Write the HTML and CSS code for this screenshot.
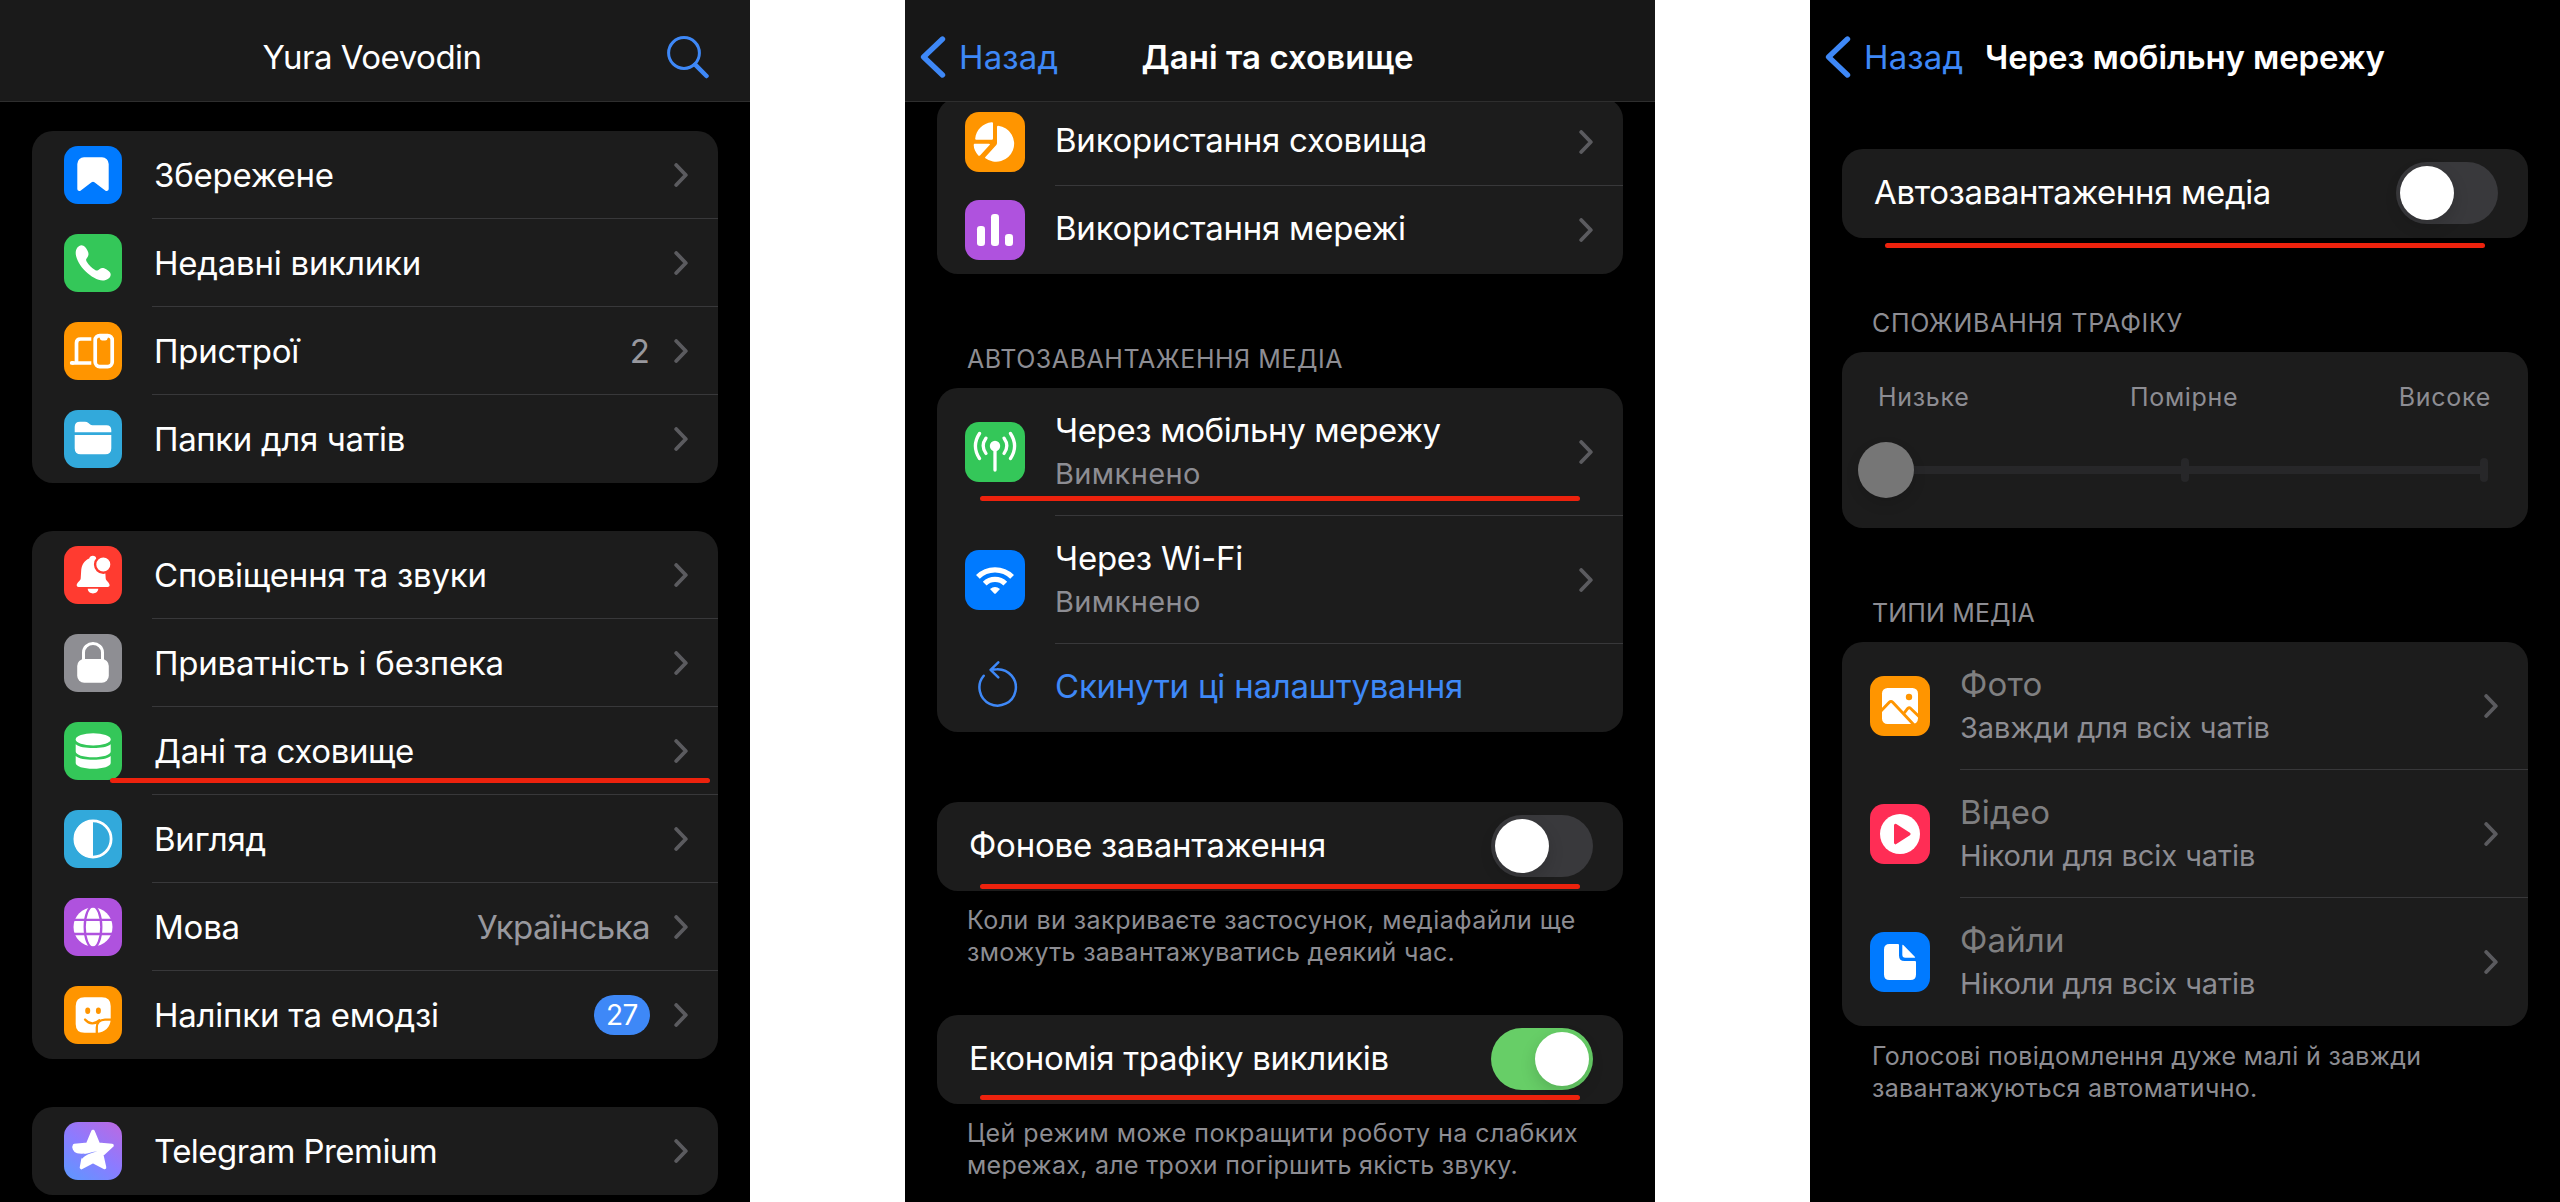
FILE: index.html
```html
<!DOCTYPE html>
<html lang="uk">
<head>
<meta charset="utf-8">
<title>Telegram</title>
<link rel="stylesheet" href="styles.css">
</head>
<body>
<svg class="defs" width="0" height="0" aria-hidden="true">
  <symbol id="chevron" viewBox="0 0 14 24"><path d="M2.200 2l9.600 10L2.200 22" fill="none" stroke="#5b5b5f" stroke-width="3.800" stroke-linecap="round" stroke-linejoin="round"/></symbol>
  <symbol id="back" viewBox="0 0 26 42"><path d="M22.500 3L3.600 21l18.900 18" fill="none" stroke="#3e88f7" stroke-width="5.400" stroke-linecap="round" stroke-linejoin="round"/></symbol>
</svg>

<main class="screens">
  <section class="phone">
    <header class="bar bar-light">
      <h1 class="title title-regular">Yura Voevodin</h1>
      <svg class="search" viewBox="0 0 44 44"><circle cx="18" cy="18" r="15.400"/><path d="M29.200 29.700L40.500 41" class="handle"/></svg>
    </header>
    <div class="card first-card">
      <div class="row">
        <svg class="icon bg-blue" viewBox="0 0 58 58"><path d="M20 11.300h18a6.700 6.700 0 0 1 6.700 6.700v24.800c0 2-2.100 3-3.500 1.700L30.400 36.300q-1.400-1.200-2.800 0l-10.800 8.200c-1.400 1.300-3.500.3-3.500-1.700V18a6.700 6.700 0 0 1 6.700-6.700z"/></svg>
        <div class="cell"><span class="label">Збережене</span><svg class="chev"><use href="#chevron"/></svg></div>
      </div>
      <div class="row">
        <svg class="icon bg-green" viewBox="0 0 58 58"><path d="M17.500 11.300c2.800 0 4.200 2.200 5.800 5s1.500 4.800.3 6.600c-1.500 2.200-2 2.700-1 4.600 2 3.500 5 6.300 8.500 8.400 1.800 1 2.400.6 4.600-1 1.800-1.300 3.800-1.300 6.500.4 2.600 1.600 4.500 3 4.500 5.300 0 3.600-4 6-8 6-5 0-12-4-17.500-9.500S11.700 24 11.700 19c0-4 2.600-7.700 5.800-7.700z"/></svg>
        <div class="cell"><span class="label">Недавні виклики</span><svg class="chev"><use href="#chevron"/></svg></div>
      </div>
      <div class="row">
        <svg class="icon bg-orange" viewBox="0 0 58 58"><g fill="none" stroke="#fff" stroke-width="3.700"><path d="M27.300 17H16.500q-4 0-4 4v19M7.700 41h19.600" stroke-linecap="butt"/><path d="M7.700 40.900h1" stroke-linecap="round"/><rect x="31.200" y="13.600" width="17" height="31" rx="4.500"/></g><path d="M34.500 13h10.500l-1.200 3q-.6 2.600-2.600 2.600h-3q-2 0-2.500-2.600z"/></svg>
        <div class="cell"><span class="label">Пристрої</span><span class="value">2</span><svg class="chev"><use href="#chevron"/></svg></div>
      </div>
      <div class="row">
        <svg class="icon bg-cyan" viewBox="0 0 58 58"><path d="M10.700 22.300V17q0-5.300 5.300-5.300h5q2 0 3.400 1.300l1.800 1.500q.9.800 2.300.8h14q4.800 0 4.800 4.700v2.300zM10.700 25h36.600v13.300q0 6-6 6H16.700q-6 0-6-6z"/></svg>
        <div class="cell"><span class="label snug">Папки для чатів</span><svg class="chev"><use href="#chevron"/></svg></div>
      </div>
    </div>

    <div class="card second-card">
      <div class="row">
        <svg class="icon bg-red" viewBox="0 0 58 58"><path d="M28.800 9.700c2 0 3.300 1.200 3.600 2.800 5.600 2 8.700 6 8.900 13.500l.4 6.500c.3 2.500 3.900 4 3.900 6.800 0 1.200-.8 1.700-2 1.700h-29c-1.200 0-1.900-.5-1.900-1.700 0-2.800 3.700-4.300 4-6.800l.4-6.500c.2-7.500 3.300-11.500 8.100-13.500.3-1.600 1.700-2.800 3.600-2.800zM23.700 42.700h10.600c-.2 2.800-2.600 4.700-5.300 4.700s-5.100-1.900-5.300-4.700z"/><circle cx="39.300" cy="18.500" r="8.200" stroke="#ff3b30" stroke-width="2.400"/></svg>
        <div class="cell"><span class="label">Сповіщення та звуки</span><svg class="chev"><use href="#chevron"/></svg></div>
      </div>
      <div class="row">
        <svg class="icon bg-gray" viewBox="0 0 58 58"><rect x="13.200" y="25" width="31.600" height="23.700" rx="7"/><path d="M19.500 27v-8.500a9.500 9 0 0 1 19 0V27" fill="none" stroke="#fff" stroke-width="3"/></svg>
        <div class="cell"><span class="label">Приватність і безпека</span><svg class="chev"><use href="#chevron"/></svg></div>
      </div>
      <div class="row">
        <svg class="icon bg-green" viewBox="0 0 58 58"><ellipse cx="29.200" cy="17.400" rx="17.500" ry="6.100"/><path d="M11.700 22.300c3.500 2.700 9.500 3.800 17.500 3.800s14-1.100 17.500-3.800V29.500c0 3.400-7.800 5.800-17.500 5.800s-17.500-2.400-17.500-5.800zM11.700 34c3.500 2.700 9.500 3.800 17.500 3.800s14-1.100 17.500-3.800v6.900c0 3.400-7.800 5.800-17.500 5.800s-17.500-2.400-17.500-5.800z"/></svg>
        <div class="cell"><span class="label snug">Дані та сховище</span><svg class="chev"><use href="#chevron"/></svg></div>
        <i class="mark mark-data"></i>
      </div>
      <div class="row">
        <svg class="icon bg-cyan" viewBox="0 0 58 58"><circle cx="29" cy="29" r="18.100" fill="none" stroke="#fff" stroke-width="2.800"/><path d="M29 10a19 19 0 0 0 0 38z"/></svg>
        <div class="cell"><span class="label">Вигляд</span><svg class="chev"><use href="#chevron"/></svg></div>
      </div>
      <div class="row">
        <svg class="icon bg-purple" viewBox="0 0 58 58"><circle cx="29" cy="29" r="19.500"/><g fill="none" stroke="#af52de" stroke-width="2.300"><ellipse cx="29" cy="29" rx="8.300" ry="20.700"/><path d="M8 21.900h42M8 36h42"/></g></svg>
        <div class="cell"><span class="label">Мова</span><span class="value tight">Українська</span><svg class="chev"><use href="#chevron"/></svg></div>
      </div>
      <div class="row">
        <svg class="icon bg-orange" viewBox="0 0 58 58"><path d="M20.500 11.300h17.400q8.800 0 8.800 8.800V33c0 8-6.500 13.800-13.700 13.800H20.500q-8.800 0-8.800-8.800V20.100q0-8.800 8.800-8.800z"/><g fill="#ff9500"><ellipse cx="23.700" cy="24.800" rx="2.500" ry="3.200"/><ellipse cx="34.400" cy="24.800" rx="2.500" ry="3.200"/></g><path d="M21 33.500c4.500 5.200 10 4.800 14.500.7M47.500 33.600H41c-5 0-8.200 3.200-8.200 8V48" fill="none" stroke="#ff9500" stroke-width="2.300" stroke-linecap="round"/></svg>
        <div class="cell"><span class="label">Наліпки та емодзі</span><span class="badge">27</span><svg class="chev"><use href="#chevron"/></svg></div>
      </div>
    </div>

    <div class="card third-card">
      <div class="row">
        <svg class="icon bg-premium" viewBox="0 0 58 58"><path d="M29 9.500l5.300 12.800 13.700 1.200-10.300 9.300 2.800 12.700L29 39.300 17.500 45.500l1.500-8c.6-3.500 5-6.500 10.500-8.500-6 .3-11.500 1.700-16 .5-3-.8-4-4.500-3-6l13.200-1.200z" stroke="#fff" stroke-width="3.600" stroke-linejoin="round"/><path d="M16 32.500c4.500.5 10-2.300 17.500-3.200-7.300 2-12 3.800-15.500 7.500z" fill="#7d84ff"/></svg>
        <div class="cell"><span class="label tight">Telegram Premium</span><svg class="chev"><use href="#chevron"/></svg></div>
      </div>
    </div>
  </section>

  <section class="phone phone-inset">
    <header class="bar bar-dark">
      <a class="back"><svg class="back-icon"><use href="#back"/></svg>Назад</a>
      <h1 class="title">Дані та сховище</h1>
    </header>
    <div class="card scrolled-card">
      <div class="row">
        <svg class="icon bg-orange" viewBox="0 0 60 60"><path d="M33.200 13.700A18.100 18.100 0 1 1 20.400 46.300Q19.700 45.600 20.400 44.900L31.300 33Q32 32.200 32 31V15Q32 13.700 33.200 13.700zM26.700 10.200Q28 10 28 11.300V26.600Q28 27.800 26.800 27.800H11.300Q10 27.800 10.200 26.500C11 18 18 11 26.700 10.200zM9.700 31.700H24q1.700 0 .6 1.300L15 43.400q-.8.900-1.700 0C10.600 40.500 8.800 37 8.700 33q0-1.300 1-1.300z"/></svg>
        <div class="cell"><span class="label">Використання сховища</span><svg class="chev"><use href="#chevron"/></svg></div>
      </div>
      <div class="row">
        <svg class="icon bg-purple" viewBox="0 0 60 60"><rect x="12" y="26" width="8" height="20" rx="3.200"/><rect x="26" y="14" width="8" height="32" rx="3.200"/><rect x="40" y="34" width="8" height="12" rx="3.200"/></svg>
        <div class="cell"><span class="label">Використання мережі</span><svg class="chev"><use href="#chevron"/></svg></div>
      </div>
    </div>

    <h2 class="group-title media-title">АВТОЗАВАНТАЖЕННЯ МЕДІА</h2>
    <div class="card">
      <div class="row row-tall">
        <svg class="icon bg-green" viewBox="0 0 60 60"><circle cx="30" cy="24" r="5.200"/><path d="M30 24v24M20.900 16.200q-5.400 7.600 0 15.200M39.100 16.200q5.400 7.600 0 15.200M14.500 11.500q-8.200 12.500 0 25M45.500 11.500q8.200 12.500 0 25" fill="none" stroke="#fff" stroke-width="3.300" stroke-linecap="round"/></svg>
        <div class="cell"><div class="stack"><span class="label snug">Через мобільну мережу</span><span class="sub">Вимкнено</span></div><svg class="chev"><use href="#chevron"/></svg></div>
        <i class="mark mark-mobile"></i>
      </div>
      <div class="row row-tall">
        <svg class="icon bg-blue" viewBox="0 0 60 60"><path d="M12.900 26.900a24.200 24.200 0 0 1 34.200 0M19.700 33.700a14.600 14.600 0 0 1 20.600 0" fill="none" stroke="#fff" stroke-width="5.300"/><path d="M25 39q5-4 10 0l-4 4.300q-1 1-2 0z"/></svg>
        <div class="cell"><div class="stack"><span class="label">Через Wi-Fi</span><span class="sub">Вимкнено</span></div><svg class="chev"><use href="#chevron"/></svg></div>
      </div>
      <div class="row">
        <svg class="icon" viewBox="0 0 60 60"><path d="M18.700 17.700A18.200 18.200 0 1 0 32 11.200Q29 11.200 26.500 11.900M33.300 4.300L25.600 11.800l7.700 7.500" fill="none" stroke="#3e88f7" stroke-width="2.500" stroke-linecap="round" stroke-linejoin="round"/></svg>
        <div class="cell"><span class="label link">Скинути ці налаштування</span></div>
      </div>
    </div>

    <div class="card toggle-card background-card">
      <div class="row toggle-row"><span class="label">Фонове завантаження</span><span class="switch"></span><i class="mark mark-background"></i></div>
    </div>
    <p class="note"><span class="airy">Коли ви закриваєте застосунок, медіафайли ще</span><br>зможуть завантажуватись деякий час.</p>

    <div class="card toggle-card economy-card">
      <div class="row toggle-row"><span class="label economy-label">Економія трафіку викликів</span><span class="switch on"></span><i class="mark mark-economy"></i></div>
    </div>
    <p class="note"><span class="airy">Цей режим може покращити роботу на слабких</span><br>мережах, але трохи погіршить якість звуку.</p>
  </section>

  <section class="phone phone-inset">
    <header class="bar bar-clear">
      <a class="back"><svg class="back-icon"><use href="#back"/></svg>Назад</a>
      <h1 class="title title-long">Через мобільну мережу</h1>
    </header>
    <div class="card toggle-card auto-card">
      <div class="row toggle-row"><span class="label snug">Автозавантаження медіа</span><span class="switch"></span><i class="mark mark-auto"></i></div>
    </div>

    <h2 class="group-title usage-title">СПОЖИВАННЯ ТРАФІКУ</h2>
    <div class="card usage-card">
      <div class="scale"><span>Низьке</span><span>Помірне</span><span>Високе</span></div>
      <div class="slider"><i class="thumb"></i><i class="tick"></i><i class="tick"></i></div>
    </div>

    <h2 class="group-title types-title">ТИПИ МЕДІА</h2>
    <div class="card disabled-card">
      <div class="row row-tall">
        <svg class="icon bg-orange" viewBox="0 0 60 60"><rect x="12" y="12" width="36" height="36" rx="5.500"/><circle cx="39" cy="21" r="3.200" fill="#ff9500"/><path d="M10 36l9.300-9.800q1.700-1.700 3.400 0L44.500 49.500M33.500 38l4-5.300q1.500-1.800 3.200-.2L49 40.500" fill="none" stroke="#ff9500" stroke-width="2.900"/></svg>
        <div class="cell"><div class="stack"><span class="label">Фото</span><span class="sub sub-long">Завжди для всіх чатів</span></div><svg class="chev"><use href="#chevron"/></svg></div>
      </div>
      <div class="row row-tall">
        <svg class="icon bg-pink" viewBox="0 0 60 60"><circle cx="30" cy="30" r="20"/><path d="M25.500 21.200l13.600 8.800-13.600 8.800z" fill="#ff2d55" stroke="#ff2d55" stroke-width="3" stroke-linejoin="round"/></svg>
        <div class="cell"><div class="stack"><span class="label">Відео</span><span class="sub sub-long">Ніколи для всіх чатів</span></div><svg class="chev"><use href="#chevron"/></svg></div>
      </div>
      <div class="row row-tall">
        <svg class="icon bg-blue" viewBox="0 0 60 60"><path d="M19.500 12H28q1 0 1 1v10.500q0 5.500 5.500 5.500H45q1 0 1 1v12.500q0 5.500-5.500 5.500h-21q-5.500 0-5.500-5.500v-25q0-5.500 5.500-5.500zM32.300 13.500q0-1.400 1-.5l11.500 11.700q1 1-.3 1h-9.200q-3 0-3-3z"/></svg>
        <div class="cell"><div class="stack"><span class="label">Файли</span><span class="sub sub-long">Ніколи для всіх чатів</span></div><svg class="chev"><use href="#chevron"/></svg></div>
      </div>
    </div>
    <p class="note">Голосові повідомлення дуже малі й завжди<br>завантажуються автоматично.</p>
  </section>
</main>
</body>
</html>
```
FILE: styles.css
```css
* { box-sizing: border-box; }
body { margin: 0; background: #fff; font-family: Inter, "Noto Sans", sans-serif; color: #fff; }
.defs { position: absolute; }
h1, h2, p { margin: 0; font-weight: 400; }

.screens { display: flex; justify-content: space-between; width: 2560px; height: 1202px; overflow: hidden; }
.phone { width: 750px; height: 1202px; background: #000; overflow: hidden; display: flex; flex-direction: column; }

/* navigation bar */
.bar { display: grid; grid-template-columns: 1fr auto 1fr; align-items: center; height: 102px; flex: none; padding: 12px 20px 0 15px; border-bottom: 1px solid #2e2e2e; z-index: 1; }
.bar-light { background: #1a1a1a; padding-top: 13px; padding-right: 21px; }
.bar-dark { background: #171717; }
.bar-clear { border-color: transparent; padding-right: 15px; }
.title { grid-column: 2; grid-row: 1; font-size: 33px; line-height: 44px; font-weight: 600; letter-spacing: 0.050px; white-space: nowrap; }
.title-regular { font-weight: 400; letter-spacing: -0.500px; }
.title-long { letter-spacing: -0.120px; }
.search { grid-column: 3; justify-self: end; width: 44px; height: 44px; margin-right: 19px; fill: none; stroke: #3e88f7; stroke-width: 3; }
.search .handle { stroke-width: 4.500; stroke-linecap: round; }
.back { grid-column: 1; grid-row: 1; display: flex; align-items: center; color: #3e88f7; font-size: 33px; line-height: 44px; letter-spacing: 0.150px; }
.back-icon { width: 26px; height: 42px; margin-right: 13px; }

/* grouped list */
.card { flex: none; margin: 0 32px; border-radius: 21px; background: #1c1c1c; }
.first-card { margin-top: 29px; }
.second-card { margin-top: 48px; }
.third-card { margin-top: 48px; }
.scrolled-card { margin-top: -4px; }
.toggle-card { height: 89px; }
.background-card { margin-top: 70px; }
.economy-card { margin-top: 39px; }
.auto-card { margin-top: 47px; }

.row { position: relative; display: flex; align-items: center; height: 88px; padding-left: 32px; }
.row-tall { height: 128px; }
.cell { flex: 1; display: flex; align-items: center; height: 100%; margin-left: 30px; padding-right: 30px; border-bottom: 1px solid #38383a; }
.row:last-child .cell { border-bottom: 0; }
.label { font-size: 33px; line-height: 42px; letter-spacing: -0.230px; white-space: nowrap; }
.cell > .label { margin-left: 2px; margin-right: auto; }
.stack { display: flex; flex-direction: column; gap: 2px; margin-right: auto; }
.link { color: #3e88f7; }
.value { font-size: 33px; line-height: 42px; color: #98989e; }
.snug { letter-spacing: -0.370px; }
.tight { letter-spacing: -0.560px; }
.economy-label { letter-spacing: -0.310px; }
.chev { flex: none; width: 14px; height: 24px; margin-left: 24px; }
.badge { display: flex; align-items: center; justify-content: center; width: 56px; height: 40px; border-radius: 20px; background: #3e88f7; font-size: 28px; letter-spacing: -0.500px; }
.sub { font-size: 29px; line-height: 42px; letter-spacing: 0.370px; color: #8d8d93; white-space: nowrap; }
.sub-long { letter-spacing: -0.060px; }
.disabled-card .label { color: #7f7f80; letter-spacing: 0.150px; }

.icon { flex: none; width: 58px; height: 58px; border-radius: 14px; fill: #fff; }
.phone-inset .icon { width: 60px; height: 60px; }
.phone-inset .row { padding-left: 28px; }
.phone-inset .cell > .label { margin-left: 0; padding-bottom: 4px; }
.bg-blue { background: #007aff; }
.bg-green { background: #34c759; }
.bg-orange { background: #ff9500; }
.bg-cyan { background: #32a9db; }
.bg-red { background: #ff3b30; }
.bg-gray { background: #8e8e93; }
.bg-purple { background: #af52de; }
.bg-pink { background: #ff2d55; }
.bg-premium { background: linear-gradient(35deg, #6593ff 10%, #8c7bff 50%, #b86ae4 95%); }

.group-title { font-size: 25px; line-height: 32px; letter-spacing: 0.540px; color: #8d8d93; padding-left: 62px; white-space: nowrap; }
.media-title { margin-top: 69px; height: 45px; }
.usage-title { margin-top: 69px; height: 45px; letter-spacing: 0.720px; }
.types-title { margin-top: 69px; height: 45px; letter-spacing: 0.150px; }
.note { margin-top: 14px; height: 72px; padding-left: 62px; font-size: 25px; line-height: 32px; letter-spacing: 0.300px; color: #8d8d93; white-space: nowrap; }
.toggle-card + .note { margin-top: 13px; }
.airy { letter-spacing: 0.480px; }

/* switches */
.phone-inset .toggle-row { justify-content: space-between; padding: 0 30px 0 32px; }
.toggle-row .label { padding-bottom: 2px; }
.switch { display: flex; width: 102px; height: 62px; padding: 4px; border-radius: 31px; background: #39393c; }
.switch::before { content: ""; width: 54px; height: 54px; border-radius: 50%; background: #fff; box-shadow: 0 6px 16px rgba(0, 0, 0, .15); }
.switch.on { justify-content: flex-end; background: #67ce67; }

/* traffic slider */
.usage-card { height: 176px; padding: 29px 37px 0 36px; }
.scale { display: flex; justify-content: space-between; font-size: 25px; line-height: 32px; letter-spacing: 0.700px; color: #8d8d93; }
.slider { display: flex; align-items: center; justify-content: space-between; height: 56px; margin: 29px 3px 0 -20px; background: linear-gradient(#272729, #272729) 0 50% / 100% 8px no-repeat; }
.thumb { width: 56px; height: 56px; margin-right: -24px; border-radius: 50%; background: #767676; box-shadow: 0 6px 14px rgba(0, 0, 0, .12); }
.tick { width: 8px; height: 24px; border-radius: 4px; background: #272729; }

/* underlines drawn over the rows */
.mark { position: absolute; width: 600px; height: 5px; border-radius: 2.500px; background: #ed220d; }
.mark-data { left: 78px; top: 71px; }
.mark-mobile { left: 43px; top: 108px; }
.mark-background { left: 43px; top: 82px; }
.mark-economy { left: 43px; top: 80px; }
.mark-auto { left: 43px; top: 94px; }
```
